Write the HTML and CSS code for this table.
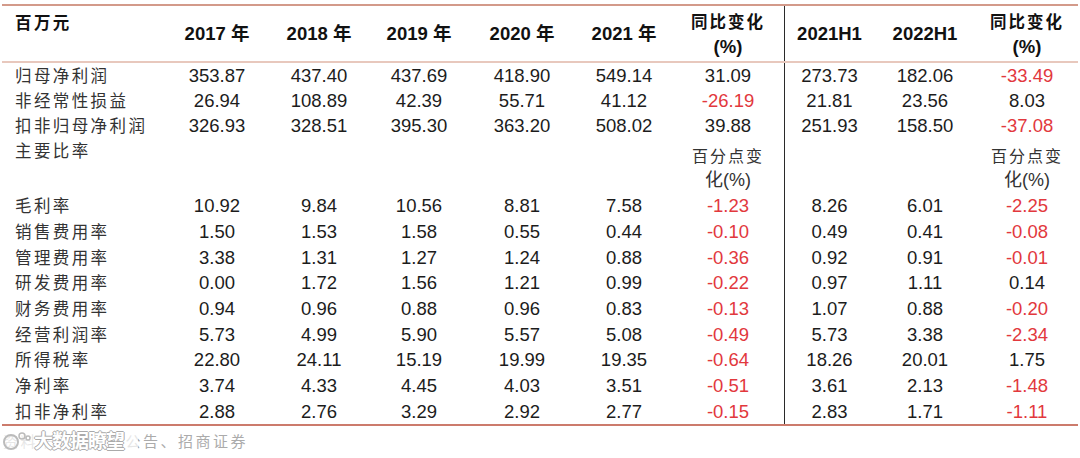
FILE: index.html
```html
<!DOCTYPE html>
<html lang="zh-CN">
<head>
<meta charset="utf-8">
<title>财务指标</title>
<link rel="stylesheet" href="styles.css">
</head>
<body>
<div class="table">
  <div class="row head">
    <div class="cell lbl top"><span class="hlbl">百万元</span></div>
    <div class="cell">2017 年</div>
    <div class="cell">2018 年</div>
    <div class="cell">2019 年</div>
    <div class="cell">2020 年</div>
    <div class="cell">2021 年</div>
    <div class="cell two"><span class="cn">同比变化</span><span>(%)</span></div>
    <div class="cell split">2021H1</div>
    <div class="cell">2022H1</div>
    <div class="cell two"><span class="cn">同比变化</span><span>(%)</span></div>
  </div>

  <div class="row a">
    <div class="cell lbl">归母净利润</div>
    <div class="cell">353.87</div><div class="cell">437.40</div><div class="cell">437.69</div><div class="cell">418.90</div><div class="cell">549.14</div>
    <div class="cell">31.09</div>
    <div class="cell split">273.73</div><div class="cell">182.06</div><div class="cell neg">-33.49</div>
  </div>
  <div class="row a">
    <div class="cell lbl">非经常性损益</div>
    <div class="cell">26.94</div><div class="cell">108.89</div><div class="cell">42.39</div><div class="cell">55.71</div><div class="cell">41.12</div>
    <div class="cell neg">-26.19</div>
    <div class="cell split">21.81</div><div class="cell">23.56</div><div class="cell">8.03</div>
  </div>
  <div class="row a">
    <div class="cell lbl">扣非归母净利润</div>
    <div class="cell">326.93</div><div class="cell">328.51</div><div class="cell">395.30</div><div class="cell">363.20</div><div class="cell">508.02</div>
    <div class="cell">39.88</div>
    <div class="cell split">251.93</div><div class="cell">158.50</div><div class="cell neg">-37.08</div>
  </div>
  <div class="row tall">
    <div class="cell lbl top">主要比率</div>
    <div class="cell"></div><div class="cell"></div><div class="cell"></div><div class="cell"></div><div class="cell"></div>
    <div class="cell note"><span>百分点变</span><span class="pct">化(%)</span></div>
    <div class="cell split"></div><div class="cell"></div>
    <div class="cell note"><span>百分点变</span><span class="pct">化(%)</span></div>
  </div>
  <div class="row b">
    <div class="cell lbl">毛利率</div>
    <div class="cell">10.92</div><div class="cell">9.84</div><div class="cell">10.56</div><div class="cell">8.81</div><div class="cell">7.58</div>
    <div class="cell neg">-1.23</div>
    <div class="cell split">8.26</div><div class="cell">6.01</div><div class="cell neg">-2.25</div>
  </div>
  <div class="row b">
    <div class="cell lbl">销售费用率</div>
    <div class="cell">1.50</div><div class="cell">1.53</div><div class="cell">1.58</div><div class="cell">0.55</div><div class="cell">0.44</div>
    <div class="cell neg">-0.10</div>
    <div class="cell split">0.49</div><div class="cell">0.41</div><div class="cell neg">-0.08</div>
  </div>
  <div class="row b">
    <div class="cell lbl">管理费用率</div>
    <div class="cell">3.38</div><div class="cell">1.31</div><div class="cell">1.27</div><div class="cell">1.24</div><div class="cell">0.88</div>
    <div class="cell neg">-0.36</div>
    <div class="cell split">0.92</div><div class="cell">0.91</div><div class="cell neg">-0.01</div>
  </div>
  <div class="row b">
    <div class="cell lbl">研发费用率</div>
    <div class="cell">0.00</div><div class="cell">1.72</div><div class="cell">1.56</div><div class="cell">1.21</div><div class="cell">0.99</div>
    <div class="cell neg">-0.22</div>
    <div class="cell split">0.97</div><div class="cell">1.11</div><div class="cell">0.14</div>
  </div>
  <div class="row b">
    <div class="cell lbl">财务费用率</div>
    <div class="cell">0.94</div><div class="cell">0.96</div><div class="cell">0.88</div><div class="cell">0.96</div><div class="cell">0.83</div>
    <div class="cell neg">-0.13</div>
    <div class="cell split">1.07</div><div class="cell">0.88</div><div class="cell neg">-0.20</div>
  </div>
  <div class="row b">
    <div class="cell lbl">经营利润率</div>
    <div class="cell">5.73</div><div class="cell">4.99</div><div class="cell">5.90</div><div class="cell">5.57</div><div class="cell">5.08</div>
    <div class="cell neg">-0.49</div>
    <div class="cell split">5.73</div><div class="cell">3.38</div><div class="cell neg">-2.34</div>
  </div>
  <div class="row b">
    <div class="cell lbl">所得税率</div>
    <div class="cell">22.80</div><div class="cell">24.11</div><div class="cell">15.19</div><div class="cell">19.99</div><div class="cell">19.35</div>
    <div class="cell neg">-0.64</div>
    <div class="cell split">18.26</div><div class="cell">20.01</div><div class="cell">1.75</div>
  </div>
  <div class="row b">
    <div class="cell lbl">净利率</div>
    <div class="cell">3.74</div><div class="cell">4.33</div><div class="cell">4.45</div><div class="cell">4.03</div><div class="cell">3.51</div>
    <div class="cell neg">-0.51</div>
    <div class="cell split">3.61</div><div class="cell">2.13</div><div class="cell neg">-1.48</div>
  </div>
  <div class="row b">
    <div class="cell lbl">扣非净利率</div>
    <div class="cell">2.88</div><div class="cell">2.76</div><div class="cell">3.29</div><div class="cell">2.92</div><div class="cell">2.77</div>
    <div class="cell neg">-0.15</div>
    <div class="cell split">2.83</div><div class="cell">1.71</div><div class="cell neg">-1.11</div>
  </div>
</div>
<div class="source">
  <span class="src-text">资料来源：公司公告、招商证券</span>
  <span class="watermark"><svg class="wm-logo" width="30" height="22" viewBox="0 0 30 22"><circle cx="9" cy="13" r="7" fill="none" stroke="#bbb" stroke-width="2"/><circle cx="20" cy="7" r="3" fill="none" stroke="#bbb" stroke-width="1.5"/><circle cx="26" cy="9" r="2" fill="none" stroke="#bbb" stroke-width="1.5"/></svg><span class="wm-text">大数据瞭望</span></span>
</div>
</body>
</html>
```
FILE: styles.css
```css
html, body {
  margin: 0;
  padding: 0;
  background: #ffffff;
}

body {
  font-family: "Liberation Sans", "Noto Sans CJK SC", sans-serif;
  color: #1c1c1c;
}

.table {
  margin: 4px 0 0 2px;
  width: 1076px;
  border-top: 2px solid #d39a8a;
  border-bottom: 2px solid #cc7b6c;
}

.row {
  display: grid;
  grid-template-columns: 164px 102px 102px 98px 108px 96px 112px 90px 102px 102px;
  font-size: 18.5px;
}

.row.head {
  height: 55px;
  border-bottom: 2px solid #e8c8bd;
  font-weight: 700;
  color: #111;
}

.row.a { height: 25px; }
.row.tall { height: 55px; }
.row.b { height: 25.7px; }

.cell {
  display: flex;
  align-items: center;
  justify-content: center;
  white-space: nowrap;
  line-height: 25px;
}

.cell.split {
  border-left: 1px solid #2a2a2a;
}

.cell.lbl {
  justify-content: flex-start;
  padding-left: 13px;
  font-family: "Noto Sans CJK SC", sans-serif;
  font-size: 16.5px;
  letter-spacing: 2.4px;
  color: #333;
  font-weight: 400;
}

.cell.top {
  align-items: flex-start;
}

.hlbl {
  padding-top: 4px;
  font-weight: 700;
  color: #111;
}

.cell.two {
  flex-direction: column;
}

.cell.two .cn {
  font-family: "Noto Sans CJK SC", sans-serif;
  font-size: 16.5px;
  letter-spacing: 2px;
  font-weight: 700;
}

.cell.note {
  flex-direction: column;
  justify-content: flex-start;
  padding-top: 5px;
  font-family: "Noto Sans CJK SC", sans-serif;
  font-size: 16px;
  letter-spacing: 2px;
  color: #333;
}

.cell.note .pct {
  font-family: "Liberation Sans", "Noto Sans CJK SC", sans-serif;
  font-size: 18px;
  letter-spacing: 0;
}

.cell.neg {
  color: #e2383d;
}

.source {
  position: relative;
  margin-top: 5px;
  padding-left: 3px;
  font-family: "Noto Sans CJK SC", sans-serif;
  font-size: 15px;
  letter-spacing: 2.5px;
  line-height: 20px;
  color: #ababab;
}

.watermark {
  position: absolute;
  left: 2px;
  top: -2px;
  width: 136px;
  display: flex;
  align-items: center;
  gap: 2px;
  background: rgba(255, 255, 255, 0.7);
}

.wm-text {
  font-family: "Noto Sans CJK SC", sans-serif;
  font-size: 19px;
  font-weight: 700;
  letter-spacing: -1px;
  color: #ffffff;
  text-shadow: 1px 0 0 #aaa, -1px 0 0 #aaa, 0 1px 0 #aaa, 0 -1px 0 #aaa;
}
```
